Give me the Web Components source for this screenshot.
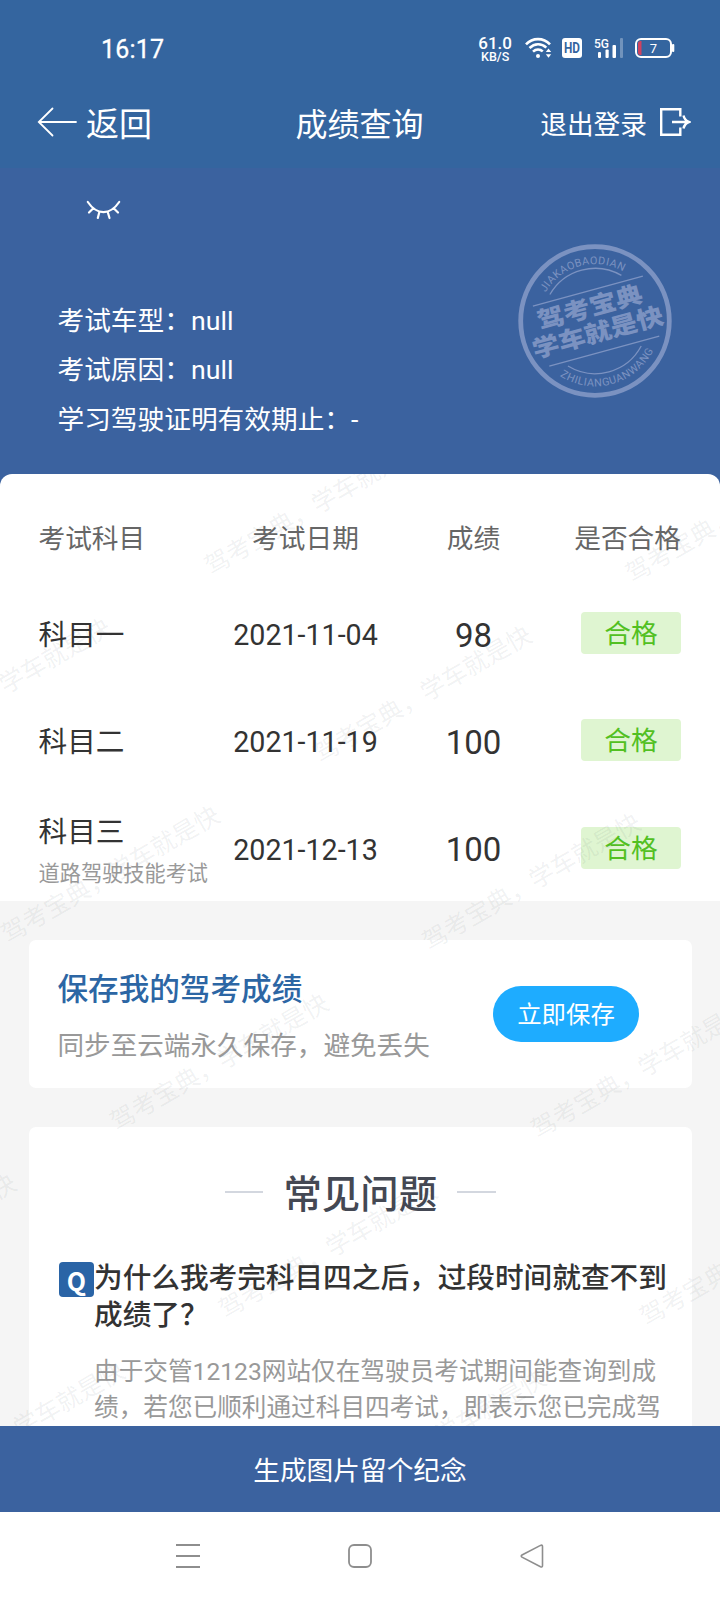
<!DOCTYPE html>
<html lang="zh-CN">
<head>
<meta charset="utf-8">
<meta name="viewport" content="width=device-width">
<title>成绩查询</title>
<style>
html, body {
  margin: 0;
  background: #fff;
}
body {
  font-family: Roboto, "Noto Sans CJK SC", sans-serif;
  font-size: 26.7px;
  color: #333;
}
</style>
</head>
<body>
<score-page>
  <status-bar slot="top" time="16:17"></status-bar>
  <title-bar slot="top" back="返回" action="退出登录">成绩查询</title-bar>
  <exam-info slot="top">
    <info-line label="考试车型">null</info-line>
    <info-line label="考试原因">null</info-line>
    <info-line label="学习驾驶证明有效期止">-</info-line>
    <brand-seal slot="seal"></brand-seal>
  </exam-info>

  <score-table>
    <score-row date="2021-11-04" score="98" result="合格">科目一</score-row>
    <score-row date="2021-11-19" score="100" result="合格">科目二</score-row>
    <score-row date="2021-12-13" score="100" result="合格" note="道路驾驶技能考试">科目三</score-row>
  </score-table>
  <save-card button="立即保存">
    保存我的驾考成绩
    <span slot="desc">同步至云端永久保存，避免丢失</span>
  </save-card>
  <faq-card heading="常见问题">
    <span slot="question">为什么我考完科目四之后，过段时间就查不到成绩了？</span>
    <span slot="answer">由于交管12123网站仅在驾驶员考试期间能查询到成绩，若您已顺利通过科目四考试，即表示您已完成驾</span>
  </faq-card>

  <bottom-button slot="bottom">生成图片留个纪念</bottom-button>
  <nav-bar slot="bottom"></nav-bar>
</score-page>

<script>
class BaseElement extends HTMLElement {
  constructor() {
    super();
    this.attachShadow({ mode: "open" });
  }
  connectedCallback() {
    const template = document.createElement("template");
    template.innerHTML = this.render();
    this.shadowRoot.replaceChildren(template.content.cloneNode(true));
  }
  attr(name) {
    return this.getAttribute(name) || "";
  }
}

class ScorePage extends BaseElement {
  render() {
    return `
<style>
:host {
  display: flex;
  flex-direction: column;
  width: 720px;
  height: 1600px;
  overflow: hidden;
}
main {
  position: relative;
  flex: 1;
  min-height: 0;
  overflow: hidden;
  background: linear-gradient(#3b629f 14px, #f5f5f5 14px);
}
</style>
<slot name="top"></slot>
<main>
  <slot></slot>
  <water-mark></water-mark>
</main>
<slot name="bottom"></slot>`;
  }
}

class StatusBar extends BaseElement {
  render() {
    return `
<style>
:host {
  display: flex;
  align-items: center;
  box-sizing: border-box;
  height: 80px;
  padding: 16px 45px 0 101px;
  background: #34659f;
  color: #fff;
}
.time {
  flex: 1;
  padding-top: 2px;
  font-size: 25px;
  letter-spacing: .2px;
  -webkit-text-stroke: .3px #fff;
}
.speed {
  display: flex;
  flex-direction: column;
  align-items: center;
  padding-top: 2px;
  font-size: 17px;
  font-weight: 500;
  line-height: 15px;
  margin-right: 13px;
}
.speed small {
  font-size: 12.500px;
  line-height: 11px;
}
svg {
  display: block;
  overflow: visible;
}
.wifi { margin-right: 10px; }
.hd { margin-right: 12px; }
.signal { margin-right: 11px; }
text { font-family: Roboto, sans-serif; }
</style>
<span class="time">${this.attr("time")}</span>
<span class="speed"><span>61.0</span><small>KB/S</small></span>
<svg class="wifi" width="27" height="20" viewBox="0 0 27 20" fill="none" stroke="#fff" stroke-width="2.600">
  <path d="M1 6.300C7.500-.6 18.500-.6 25 6.300"/>
  <path d="M4.500 10C9.500 5 16.500 5 21.300 9.600"/>
  <path d="M8 13.600c3-2.700 7-2.700 9.800-.2"/>
  <circle cx="13" cy="18" r="2" fill="#fff" stroke="none"/>
  <path d="M20.800 14l2.700-3.500 2.700 3.500zM20.800 16.300l2.700 3.500 2.700-3.500z" fill="#fff" stroke="none"/>
</svg>
<svg class="hd" width="20" height="20" viewBox="0 0 20 20">
  <rect width="20" height="20" rx="3" fill="#fff"/>
  <text x="10" y="15.200" text-anchor="middle" font-size="14" font-weight="700" textLength="16" lengthAdjust="spacingAndGlyphs" fill="#34659f">HD</text>
</svg>
<svg class="signal" width="30" height="20" viewBox="0 0 30 20" fill="#fff">
  <text x="0" y="9.500" font-size="12.500" font-weight="500" textLength="15" lengthAdjust="spacingAndGlyphs">5G</text>
  <rect x="4" y="14" width="3" height="6" rx="1"/>
  <rect x="11.500" y="11.500" width="3.200" height="8.500" rx="1"/>
  <rect x="18.500" y="7" width="3.500" height="13" rx="1"/>
  <rect x="26" y="0" width="3" height="20" rx="1" opacity=".3"/>
</svg>
<svg width="40" height="20" viewBox="0 0 40 20">
  <rect x="1" y="1" width="35" height="18" rx="5" fill="none" stroke="#fff" stroke-width="2"/>
  <rect x="37" y="6" width="2.300" height="8" rx="1" fill="#fff"/>
  <path d="M6.500 3v14H5.500a2.500 2.500 0 0 1-2.500-2.500v-9A2.500 2.500 0 0 1 5.500 3z" fill="#cf4260"/>
  <text x="18.500" y="14.700" text-anchor="middle" font-size="13" fill="#fff">7</text>
</svg>`;
  }
}

class TitleBar extends BaseElement {
  render() {
    return `
<style>
:host {
  display: grid;
  grid-template-columns: 1fr auto 1fr;
  align-items: center;
  box-sizing: border-box;
  height: 88px;
  padding: 0 29px 0 37px;
  background: #34659f;
  color: #fff;
  font-size: 32px;
  line-height: 40px;
}
.back, .action {
  display: flex;
  align-items: center;
}
.back {
  gap: 9px;
  font-size: 33px;
}
.title { margin-right: 9px; }
.back span, .title, .action span { padding-top: 1px; }
.action {
  justify-content: flex-end;
  gap: 12px;
  font-size: 26.700px;
}
svg {
  display: block;
  margin-top: -4px;
}
</style>
<span class="back">
  <svg width="40" height="30" viewBox="0 0 40 30" fill="none" stroke="#fff" stroke-width="1.800" stroke-linecap="round">
    <path d="M15.500 1.500L1.800 15l13.700 13.500M2 15h37"/>
  </svg>
  <span>${this.attr("back")}</span>
</span>
<span class="title"><slot></slot></span>
<span class="action">
  <span>${this.attr("action")}</span>
  <svg width="32" height="30" viewBox="0 0 32 30" fill="none" stroke="#fff" stroke-width="2.400">
    <path d="M21.300 9.500V2.200H2.200v25.600h19.100v-7.300M13 15h16.500M24.500 8.500c.8 3.500 2.500 5.500 5.500 6.500-3 1-4.700 3-5.500 6.500"/>
  </svg>
</span>`;
  }
}

class ExamInfo extends BaseElement {
  render() {
    return `
<style>
:host {
  display: flex;
  justify-content: space-between;
  box-sizing: border-box;
  height: 306px;
  padding: 30px 48px 0 57.500px;
  background: #3b629f;
  color: #fff;
}
.left {
  display: flex;
  flex-direction: column;
}
svg {
  display: block;
  margin: 0 0 75.500px 28.500px;
}
.seal { padding-top: 46px; }
</style>
<div class="left">
  <svg width="36" height="23" viewBox="0 0 36 23" fill="none" stroke="#fff" stroke-width="2.200" stroke-linecap="round">
    <path d="M1.800 4C11 17.500 24 17.500 33.200 4M7.300 10.300l-4.300 4.200M13.300 14.300l-1.500 5.700M21.800 14.300l1.700 5.700M27.700 10.300l4.300 4.200"/>
  </svg>
  <slot></slot>
</div>
<div class="seal"><slot name="seal"></slot></div>`;
  }
}

class InfoLine extends BaseElement {
  render() {
    return `
<style>
:host {
  display: block;
  height: 49.600px;
  line-height: 49.600px;
  white-space: nowrap;
}
</style>
${this.attr("label")}：<slot></slot>`;
  }
}

class BrandSeal extends BaseElement {
  render() {
    return `
<style>
:host {
  display: block;
  width: 154px;
  height: 154px;
}
svg { display: block; }
text {
  fill: #7b92c1;
  font-family: Roboto, sans-serif;
  font-size: 10.800px;
}
.slogan {
  font-family: "Noto Sans CJK SC", sans-serif;
  font-weight: 900;
  font-size: 27px;
}
</style>
<svg width="154" height="154" viewBox="-77 -77 154 154" fill="none" stroke="#7b92c1">
  <defs>
    <path id="top" d="M-49.500 28.300A57 57 0 1 1 49.500 28.300" />
    <path id="bottom" d="M-64 -11A65 65 0 1 0 64 -11" />
  </defs>
  <circle r="74.300" stroke-width="4.800"/>
  <g transform="rotate(-15.300)">
    <path d="M-56-30.700H58M-56 31.500H58" stroke-width="1.300"/>
    <path d="M-36.500-37.500A52.300 52.300 0 0 1 37.500-37M-38 36.300A52.300 52.300 0 0 0 38 36.300" stroke-width="1.300"/>
    <g stroke="none">
      <text class="slogan" transform="translate(-1.400 -6) scale(1 .88)" text-anchor="middle">驾考宝典</text>
      <text class="slogan" transform="translate(-.3 20.300) scale(1 .88)" text-anchor="middle">学车就是快</text>
      <text text-anchor="middle"><textPath href="#top" startOffset="50%" textLength="89">JIAKAOBAODIAN</textPath></text>
      <text text-anchor="middle"><textPath href="#bottom" startOffset="50%" textLength="109">ZHILIANGUANWANG</textPath></text>
    </g>
  </g>
</svg>`;
  }
}

class ScoreTable extends BaseElement {
  render() {
    return `
<style>
:host {
  display: block;
  height: 427px;
  border-radius: 12px 12px 0 0;
  background: #fff;
}
.head {
  display: grid;
  grid-template-columns: 170px 194px 142px 1fr;
  align-items: center;
  box-sizing: border-box;
  height: 105.500px;
  padding: 20px 39px 0 38.500px;
  color: #666;
  text-align: center;
}
.head :first-child { text-align: left; }
.head :last-child { text-align: right; }
</style>
<div class="head">
  <span>考试科目</span><span>考试日期</span><span>成绩</span><span>是否合格</span>
</div>
<slot></slot>`;
  }
}

class ScoreRow extends BaseElement {
  render() {
    const note = this.attr("note");
    return `
<style>
:host {
  display: grid;
  grid-template-columns: 170px 194px 142px 1fr;
  align-items: center;
  height: 107.300px;
  padding: 0 39px 0 38.500px;
  font-size: 28.650px;
  text-align: center;
}
.subject, .date, .score { padding-top: 4px; }
.subject {
  text-align: left;
  line-height: 42.500px;
}
.subject.noted { padding-top: 11px; }
.subject small {
  display: block;
  font-size: 21.200px;
  color: #999;
  white-space: nowrap;
}
.score { font-size: 33px; }
.result {
  box-sizing: border-box;
  justify-self: end;
  width: 100px;
  height: 42px;
  padding-top: 2px;
  border-radius: 4px;
  background: #dff5d1;
  color: #52c022;
  font-size: 26.700px;
  line-height: 40px;
}
</style>
<span class="subject${note ? " noted" : ""}"><slot></slot>${note ? `<small>${note}</small>` : ""}</span>
<span class="date">${this.attr("date")}</span>
<span class="score">${this.attr("score")}</span>
<span class="result">${this.attr("result")}</span>`;
  }
}

class SaveCard extends BaseElement {
  render() {
    return `
<style>
:host {
  display: flex;
  align-items: center;
  justify-content: space-between;
  box-sizing: border-box;
  height: 148px;
  margin: 39px 28.500px;
  padding: 0 52.500px 0 29px;
  border-radius: 7px;
  background: #fff;
}
.text { padding-top: 8px; }
h2 {
  margin: 0 0 8px;
  font-size: 30.600px;
  font-weight: 500;
  line-height: 48px;
  color: #2c66a4;
}
p {
  margin: 0;
  font-size: 26.600px;
  line-height: 48px;
  color: #999;
}
button {
  width: 146px;
  height: 56px;
  padding: 0 0 3px;
  border: 0;
  border-radius: 28px;
  background: #1eacff;
  color: #fff;
  font: inherit;
  font-size: 24.400px;
}
</style>
<div class="text">
  <h2><slot></slot></h2>
  <p><slot name="desc"></slot></p>
</div>
<button>${this.attr("button")}</button>`;
  }
}

class FaqCard extends BaseElement {
  render() {
    return `
<style>
:host {
  display: block;
  height: 400px;
  margin: 0 28.500px;
  padding: 40px 20px 0 30.500px;
  border-radius: 7px;
  background: #fff;
}
h2 {
  display: flex;
  align-items: center;
  justify-content: center;
  gap: 20px;
  margin: 0 10px 0 0;
  font-size: 38.400px;
  font-weight: 500;
  line-height: 56px;
  color: #444853;
}
h2::before, h2::after {
  content: "";
  width: 38.500px;
  height: 2px;
  margin-bottom: 7px;
  background: #d3d7df;
}
.item {
  display: flex;
  margin-top: 36px;
}
.q {
  flex: none;
  width: 35px;
  height: 35px;
  margin-top: 3px;
  border-radius: 4px;
  background: #2a64a6;
  color: #fff;
  font: 700 25px/36px "Noto Sans CJK SC", sans-serif;
  text-align: center;
}
.question {
  padding-top: .5px;
  font-size: 28.650px;
  font-weight: 500;
  line-height: 37.700px;
}
.answer {
  width: 570px;
  margin-top: 19px;
  font-size: 24.650px;
  line-height: 36.200px;
  color: #999;
}
</style>
<h2>${this.attr("heading")}</h2>
<div class="item">
  <span class="q">Q</span>
  <div>
    <div class="question"><slot name="question"></slot></div>
    <div class="answer"><slot name="answer"></slot></div>
  </div>
</div>`;
  }
}

// slanted brand text repeated on a skewed grid over the scrolling area
class WaterMark extends BaseElement {
  render() {
    let marks = "";
    for (let row = 0; row < 6; row++) {
      for (let col = -3; col < 2; col++) {
        const x = 217 + row * 108.8 + col * 421;
        const y = 88 + row * 187.7 + col * 7.5;
        if (x < -195 || x > 730) continue;
        marks += `<text transform="translate(${x} ${y}) rotate(-30)" x="-12" y="9">驾考宝典，学车就是快</text>`;
      }
    }
    return `
<style>
:host {
  position: absolute;
  inset: 0;
  pointer-events: none;
}
svg { display: block; }
text {
  font: 24.700px "Noto Sans CJK SC", sans-serif;
  fill: rgba(60, 70, 80, .08);
}
</style>
<svg width="720" height="952">${marks}</svg>`;
  }
}

class BottomButton extends BaseElement {
  render() {
    return `
<style>
:host {
  display: block;
  height: 86.500px;
  background: #3b629f;
  color: #fff;
  line-height: 90px;
  text-align: center;
}
</style>
<slot></slot>`;
  }
}

class NavBar extends BaseElement {
  render() {
    return `
<style>
:host {
  display: flex;
  align-items: center;
  justify-content: center;
  gap: 146px;
  height: 88px;
  background: #fff;
}
svg { display: block; }
</style>
<svg width="26" height="26" viewBox="0 0 26 26" fill="none" stroke="#8e8e8e" stroke-width="2">
  <path d="M1 2h24M1 13h24M1 24h24"/>
</svg>
<svg width="26" height="26" viewBox="0 0 26 26" fill="none" stroke="#8e8e8e" stroke-width="1.800">
  <rect x="2" y="2" width="22" height="22" rx="5"/>
</svg>
<svg width="26" height="26" viewBox="0 0 26 26" fill="none" stroke="#8e8e8e" stroke-width="1.600">
  <path d="M3 12Q1.500 13 3 14.200L21.500 23.800Q23.500 24.500 23.500 22.500V3.500Q23.500 1.500 21.500 2.400z"/>
</svg>`;
  }
}

customElements.define("score-page", ScorePage);
customElements.define("status-bar", StatusBar);
customElements.define("title-bar", TitleBar);
customElements.define("exam-info", ExamInfo);
customElements.define("info-line", InfoLine);
customElements.define("brand-seal", BrandSeal);
customElements.define("score-table", ScoreTable);
customElements.define("score-row", ScoreRow);
customElements.define("save-card", SaveCard);
customElements.define("faq-card", FaqCard);
customElements.define("water-mark", WaterMark);
customElements.define("bottom-button", BottomButton);
customElements.define("nav-bar", NavBar);
</script>
</body>
</html>
